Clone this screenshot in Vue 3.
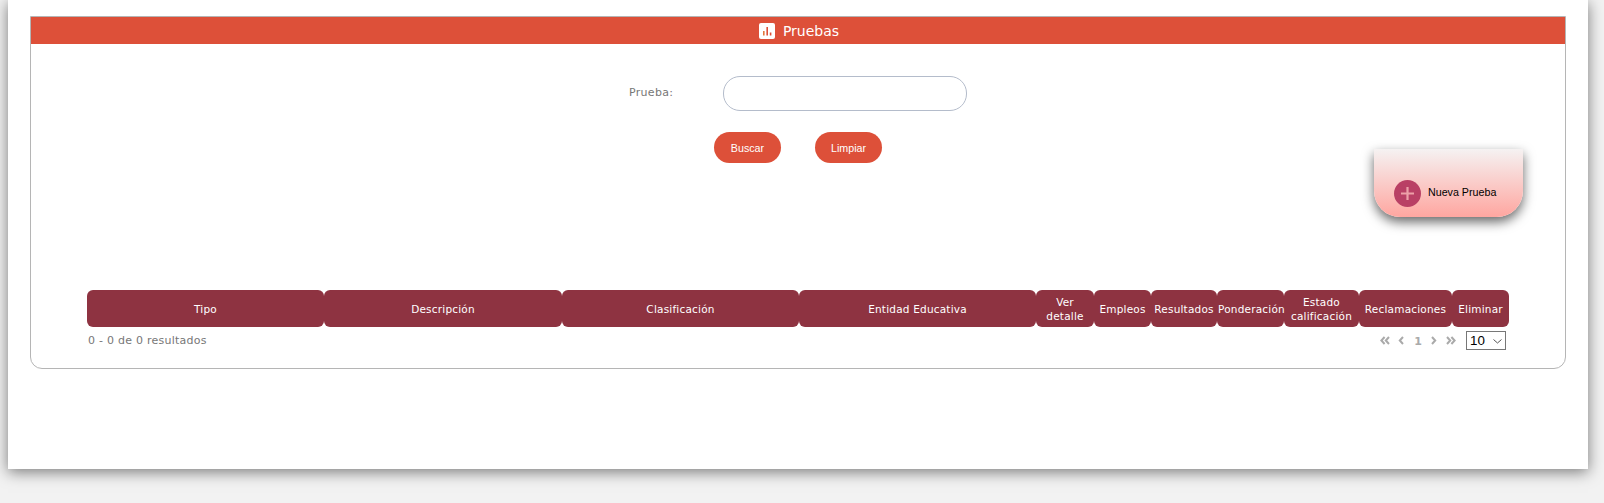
<script setup>
import { ref } from 'vue'

// columnas de la tabla
const columns = [
  { label: 'Tipo', width: 237 },
  { label: 'Descripción', width: 238 },
  { label: 'Clasificación', width: 237 },
  { label: 'Entidad Educativa', width: 237 },
  { label: 'Ver detalle', width: 58 },
  { label: 'Empleos', width: 57 },
  { label: 'Resultados', width: 66 },
  { label: 'Ponderación', width: 67 },
  { label: 'Estado calificación', width: 75 },
  { label: 'Reclamaciones', width: 93 },
  { label: 'Eliminar', width: 57 }
]

const prueba = ref('')
const pageSize = ref(10)
</script>

<template>
  <div class="page">
    <section class="panel">
      <header class="panel-title">
        <svg class="title-icon" width="16" height="16" viewBox="0 0 16 16">
          <rect width="16" height="16" rx="2" fill="#fff" />
          <rect x="4" y="8" width="1.6" height="4.5" fill="#e2783c" />
          <rect x="7.4" y="4" width="1.6" height="8.5" fill="#dd5039" />
          <rect x="10.8" y="9.5" width="1.6" height="3" fill="#dd5039" />
        </svg>
        <span>Pruebas</span>
      </header>

      <div class="search">
        <div class="field">
          <label for="prueba">Prueba:</label>
          <input id="prueba" v-model="prueba" type="text" />
        </div>
        <div class="actions">
          <button type="button">Buscar</button>
          <button type="button">Limpiar</button>
        </div>

        <!-- tarjeta flotante -->
        <div class="new-card">
          <span class="plus">
            <svg width="15" height="15" viewBox="0 0 15 15">
              <path d="M7.5 1v13M1 7.5h13" stroke="#eda0a8" stroke-width="2.2" fill="none" />
            </svg>
          </span>
          <span>Nueva Prueba</span>
        </div>
      </div>

      <div class="grid-wrap">
        <table class="grid">
          <colgroup>
            <col v-for="col in columns" :key="col.label" :style="{ width: col.width + 'px' }" />
          </colgroup>
          <thead>
            <tr>
              <th v-for="col in columns" :key="col.label">{{ col.label }}</th>
            </tr>
          </thead>
        </table>

        <div class="pager">
          <span class="count">0 - 0 de 0 resultados</span>
          <div class="pager-right">
            <svg class="nav first" width="10" height="9" viewBox="0 0 10 9">
              <path d="M4.6 1 1.4 4.5 4.6 8M9 1 5.8 4.5 9 8" />
            </svg>
            <svg class="nav" width="6" height="9" viewBox="0 0 6 9">
              <path d="M5 1 1.8 4.5 5 8" />
            </svg>
            <span class="page-num">1</span>
            <svg class="nav" width="6" height="9" viewBox="0 0 6 9">
              <path d="M1 1 4.2 4.5 1 8" />
            </svg>
            <svg class="nav" width="10" height="9" viewBox="0 0 10 9">
              <path d="M1 1 4.2 4.5 1 8M5.4 1 8.6 4.5 5.4 8" />
            </svg>
            <div class="size-select">
              <select v-model="pageSize">
                <option :value="10">10</option>
                <option :value="20">20</option>
                <option :value="50">50</option>
              </select>
              <svg class="chevron" width="9" height="5" viewBox="0 0 9 5">
                <path d="M0.5 0.5 4.5 4 8.5 0.5" />
              </svg>
            </div>
          </div>
        </div>
      </div>
    </section>
  </div>
</template>

<style>
html,
body {
  margin: 0;
  min-height: 503px;
  background: #f2f2f2;
}
</style>

<style scoped>
.page {
  box-sizing: border-box;
  width: 1580px;
  height: 469px;
  margin-left: 8px;
  padding: 16px 22px 0;
  background: #fff;
  box-shadow: 0 3px 14px rgba(0, 0, 0, 0.5);
  font-family: "DejaVu Sans", Verdana, sans-serif;
}

.panel {
  box-sizing: border-box;
  width: 1536px;
  height: 353px;
  border: 1px solid #b5b5b5;
  border-radius: 0 0 12px 12px;
}

.panel-title {
  display: flex;
  align-items: center;
  justify-content: center;
  gap: 8px;
  height: 27px;
  padding-left: 2px;
  background: #dd5039;
  color: #fff;
  font-size: 14px;
}

.search {
  position: relative;
  height: 246px;
  padding-top: 32px;
  box-sizing: border-box;
}

.field {
  display: flex;
  align-items: center;
  height: 35px;
  padding-left: 598px;
}

.field label {
  width: 94px;
  margin-top: -2px;
  color: #777;
  font-size: 11px;
  letter-spacing: 0.3px;
}

.field input {
  box-sizing: border-box;
  width: 244px;
  height: 35px;
  border: 1px solid #b4bccb;
  border-radius: 17px;
  outline: none;
}

.actions {
  display: flex;
  gap: 34px;
  margin-top: 21px;
  padding-left: 683px;
}

.actions button {
  width: 67px;
  height: 31px;
  padding: 0;
  border: none;
  border-radius: 16px;
  background: #dd5039;
  color: #fff;
  font-family: "Liberation Sans", Arial, sans-serif;
  font-size: 10.7px;
}

.new-card {
  position: absolute;
  top: 105px;
  right: 42px;
  display: flex;
  align-items: flex-start;
  gap: 7px;
  box-sizing: border-box;
  width: 149px;
  height: 68px;
  padding: 31px 0 0 20px;
  border-radius: 0 0 26px 26px;
  background: linear-gradient(#f5f2f2, #ffa6a0);
  box-shadow: 0 5px 12px rgba(0, 0, 0, 0.6);
  color: #000;
  font-family: "Liberation Sans", Arial, sans-serif;
  font-size: 10.7px;
  line-height: 24px;
}

.plus {
  display: flex;
  align-items: center;
  justify-content: center;
  width: 27px;
  height: 27px;
  border-radius: 50%;
  background: #b94065;
}

.grid-wrap {
  width: 1422px;
  margin-left: 56px;
}

.grid {
  width: 1422px;
  table-layout: fixed;
  border-collapse: collapse;
}

.grid th {
  height: 37px;
  padding: 0 1px;
  border-radius: 6px;
  background: #8e3341;
  color: #fff;
  font-size: 10.5px;
  font-weight: 400;
  letter-spacing: 0.2px;
  line-height: 14px;
  text-align: center;
}

.pager {
  display: flex;
  align-items: center;
  justify-content: space-between;
  height: 26px;
  padding: 0 3px 0 1px;
}

.count {
  color: #777;
  font-size: 11px;
  letter-spacing: 0.25px;
}

.pager-right {
  display: flex;
  align-items: center;
}

.nav {
  margin-right: 9px;
}

.nav.first {
  margin-right: 8px;
}

.nav path {
  fill: none;
  stroke: #aaa;
  stroke-width: 2;
}

.page-num {
  margin: 2px 9px 0 1px;
  color: #aaa;
  font-size: 11px;
  font-weight: 700;
}

.size-select {
  position: relative;
  height: 19px;
  margin-left: 1px;
}

select {
  display: block;
  box-sizing: border-box;
  width: 40px;
  height: 19px;
  padding: 0 0 0 3px;
  appearance: none;
  border: 1px solid #777;
  border-radius: 0;
  background: #fff;
  color: #000;
  font-family: "Liberation Sans", Arial, sans-serif;
  font-size: 13.33px;
}

.chevron {
  position: absolute;
  top: 8px;
  right: 4px;
  pointer-events: none;
}

.chevron path {
  fill: none;
  stroke: #555;
  stroke-width: 1;
}
</style>
